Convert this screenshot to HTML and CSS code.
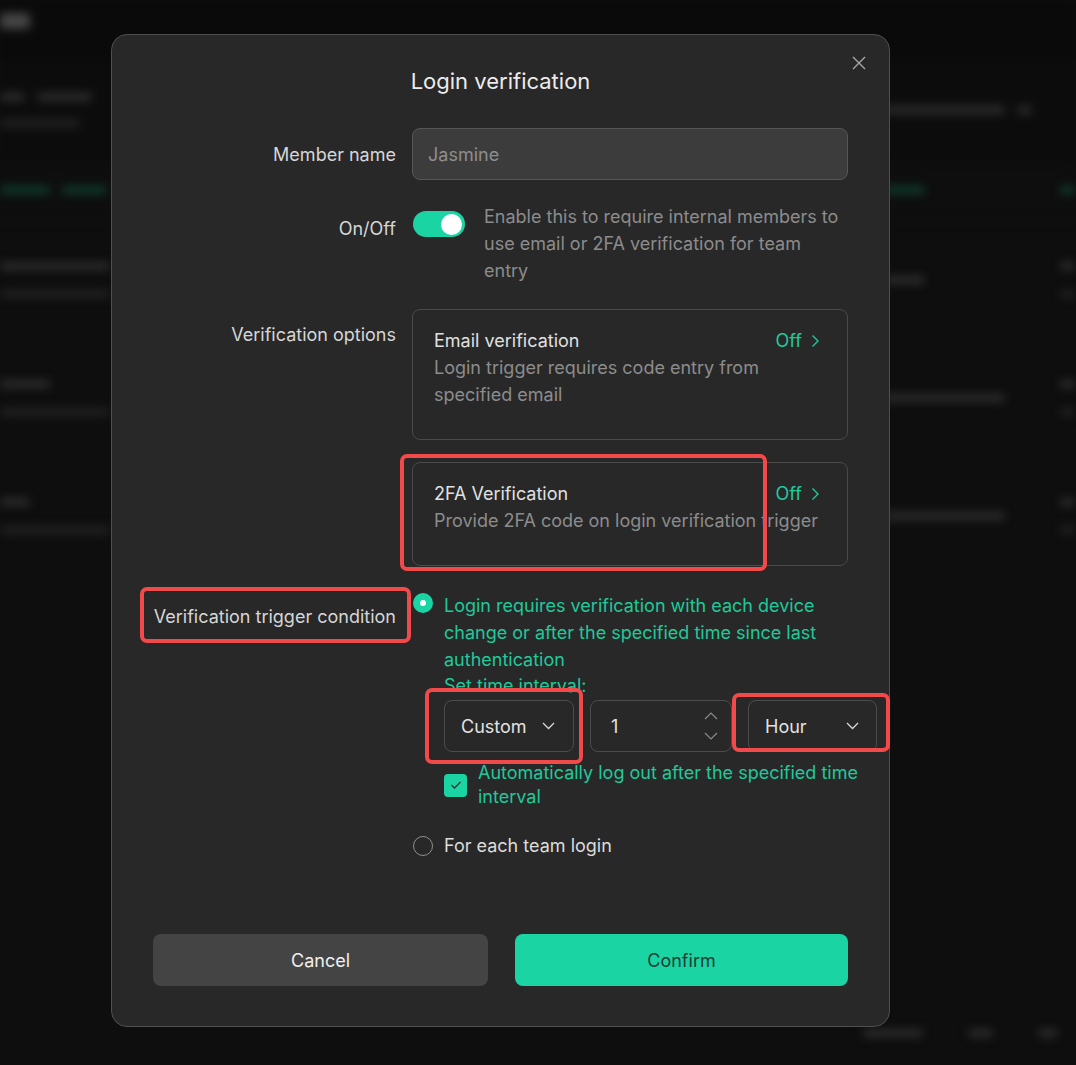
FILE: index.html
```html
<!DOCTYPE html>
<html lang="en">
<head>
    <meta charset="UTF-8">
    <meta name="viewport" content="width=device-width, initial-scale=1.0">
    <title>Login verification</title>
    <link rel="stylesheet" href="styles.css">
</head>
<body>
    <!-- blurred page behind the dialog -->
    <div class="backdrop">
        <div class="bd-top"><span class="bar bar-brand"></span></div>
        <div class="bd-row bd-header">
            <div class="bd-cell"><span class="bar-pair"><span class="bar w25"></span><span class="bar w55"></span></span><span class="bar w80 dim"></span></div>
            <div class="bd-cell"></div>
            <div class="bd-cell"><span class="bar-pair"><span class="bar w120"></span><span class="bar w15"></span></span></div>
            <div class="bd-cell"></div>
        </div>
        <div class="bd-row bd-tabs">
            <div class="bd-cell"><span class="bar-pair"><span class="bar green w50"></span><span class="bar green w45"></span></span></div>
            <div class="bd-cell"></div>
            <div class="bd-cell"><span class="bar green w40"></span></div>
            <div class="bd-cell"><span class="bar green w15"></span></div>
        </div>
        <div class="bd-row bd-item">
            <div class="bd-cell"><span class="bar w110"></span><span class="bar w110 dim"></span></div>
            <div class="bd-cell"></div>
            <div class="bd-cell"><span class="bar w40"></span></div>
            <div class="bd-cell"><span class="bar w15"></span><span class="bar w15 dim"></span></div>
        </div>
        <div class="bd-row bd-item">
            <div class="bd-cell"><span class="bar w50"></span><span class="bar w110 dim"></span></div>
            <div class="bd-cell"></div>
            <div class="bd-cell"><span class="bar w120"></span></div>
            <div class="bd-cell"><span class="bar w15"></span><span class="bar w15 dim"></span></div>
        </div>
        <div class="bd-row bd-item">
            <div class="bd-cell"><span class="bar w30"></span><span class="bar w110 dim"></span></div>
            <div class="bd-cell"></div>
            <div class="bd-cell"><span class="bar w120"></span></div>
            <div class="bd-cell"><span class="bar w15"></span><span class="bar w15 dim"></span></div>
        </div>
        <div class="bd-pager">
            <span class="bar w60"></span>
            <span class="bar w25"></span>
            <span class="bar w20"></span>
        </div>
    </div>

    <div class="dialog">
        <button class="close" aria-label="Close">
            <svg width="16" height="16" viewBox="0 0 16 16"><path d="M2 2L14 14M14 2L2 14" stroke="#a8a8a8" stroke-width="1.4" fill="none"/></svg>
        </button>
        <h2 class="dialog-title">Login verification</h2>

        <div class="form">
            <div class="form-row row-name">
                <label class="form-label">Member name</label>
                <div class="text-input">Jasmine</div>
            </div>

            <div class="form-row row-switch">
                <label class="form-label">On/Off</label>
                <div class="switch-line">
                    <span class="switch"><span class="knob"></span></span>
                    <p class="hint">Enable this to require internal members to use email or 2FA verification for team entry</p>
                </div>
            </div>

            <div class="form-row row-options">
                <label class="form-label">Verification options</label>
                <div class="option-list">
                    <div class="option-card">
                        <div class="option-head">
                            <span class="option-name">Email verification</span>
                            <span class="option-state">Off
                                <svg width="9" height="14" viewBox="0 0 9 14"><path d="M1.5 1.5L7 7L1.5 12.5" stroke="#1fcb9c" stroke-width="1.4" fill="none"/></svg>
                            </span>
                        </div>
                        <p class="option-desc">Login trigger requires code entry from specified email</p>
                    </div>
                    <div class="option-card">
                        <div class="option-head">
                            <span class="option-name">2FA Verification</span>
                            <span class="option-state">Off
                                <svg width="9" height="14" viewBox="0 0 9 14"><path d="M1.5 1.5L7 7L1.5 12.5" stroke="#1fcb9c" stroke-width="1.4" fill="none"/></svg>
                            </span>
                        </div>
                        <p class="option-desc nowrap">Provide 2FA code on login verification trigger</p>
                    </div>
                </div>
            </div>

            <div class="form-row row-trigger">
                <label class="form-label">Verification trigger condition</label>
                <div class="radio-group">
                    <div class="radio-item checked">
                        <span class="radio"><span class="dot"></span></span>
                        <div class="radio-body">
                            <p class="radio-text">Login requires verification with each device change or after the specified time since last authentication</p>
                            <p class="radio-text">Set time interval:</p>
                            <div class="interval">
                                <div class="select sel-custom">
                                    <span>Custom</span>
                                    <svg width="13" height="8" viewBox="0 0 13 8"><path d="M1 1L6.5 6.5L12 1" stroke="#d8d8d8" stroke-width="1.3" fill="none"/></svg>
                                </div>
                                <div class="select num-input">
                                    <span>1</span>
                                    <span class="spinner">
                                        <svg width="14" height="8" viewBox="0 0 14 8"><path d="M1 7L7 1L13 7" stroke="#8a8a8a" stroke-width="1.2" fill="none"/></svg>
                                        <svg width="14" height="8" viewBox="0 0 14 8"><path d="M1 1L7 7L13 1" stroke="#8a8a8a" stroke-width="1.2" fill="none"/></svg>
                                    </span>
                                </div>
                                <div class="select sel-hour">
                                    <span>Hour</span>
                                    <svg width="13" height="8" viewBox="0 0 13 8"><path d="M1 1L6.5 6.5L12 1" stroke="#d8d8d8" stroke-width="1.3" fill="none"/></svg>
                                </div>
                            </div>
                            <div class="check-line">
                                <span class="checkbox">
                                    <svg width="12" height="10" viewBox="0 0 12 10"><path d="M1.5 5L4.5 8L10.5 2" stroke="#1b3c33" stroke-width="1.4" fill="none"/></svg>
                                </span>
                                <span class="check-text">Automatically log out after the specified time interval</span>
                            </div>
                        </div>
                    </div>
                    <div class="radio-item">
                        <span class="radio"></span>
                        <span class="radio-label">For each team login</span>
                    </div>
                </div>
            </div>
        </div>

        <div class="dialog-footer">
            <button class="btn btn-cancel">Cancel</button>
            <button class="btn btn-confirm">Confirm</button>
        </div>
    </div>

    <!-- red annotation frames drawn over the screenshot -->
    <div class="mark mark-2fa"></div>
    <div class="mark mark-label"></div>
    <div class="mark mark-custom"></div>
    <div class="mark mark-hour"></div>
</body>
</html>
```

FILE: styles.css
```css
body {
    margin: 0;
    width: 1076px;
    height: 1065px;
    overflow: hidden;
    position: relative;
    background-color: #0e0e0e;
    font-family: Inter, "Noto Sans", Arial, sans-serif;
    color: #d6d6d6;
}
p {
    margin: 0;
}

/* blurred page */
.backdrop {
    position: absolute;
    inset: 0;
    filter: blur(5px);
    display: flex;
    flex-direction: column;
}
.bd-top {
    height: 60px;
    padding-top: 13px;
    box-sizing: border-box;
    background-color: #0a0a0a;
}
.bar {
    display: block;
    height: 8px;
    border-radius: 4px;
    background-color: #2d2d2d;
}
.bar.dim {
    background-color: #222;
}
.bar.green {
    background-color: #0f3b2d;
}
.bar-brand {
    width: 30px;
    height: 16px;
    background-color: #454545;
}
.bar-pair {
    display: flex;
    gap: 12px;
}
.w15 { width: 15px; }
.w20 { width: 20px; }
.w25 { width: 25px; }
.w30 { width: 30px; }
.w40 { width: 40px; }
.w45 { width: 45px; }
.w50 { width: 50px; }
.w55 { width: 55px; }
.w60 { width: 60px; }
.w80 { width: 80px; }
.w110 { width: 110px; }
.w120 { width: 120px; }
.bd-row {
    display: grid;
    grid-template-columns: 120px 765px 175px 1fr;
}
.bd-cell {
    display: flex;
    flex-direction: column;
    justify-content: center;
    gap: 20px;
}
.bd-header {
    height: 100px;
    background-color: #0c0c0c;
}
.bd-header .bd-cell {
    gap: 18px;
}
.bd-tabs {
    height: 60px;
    border-bottom: 1px solid #151515;
}
.bd-item {
    height: 118px;
}
.bd-pager {
    margin-top: auto;
    margin-bottom: 28px;
    display: flex;
    justify-content: flex-end;
    align-items: center;
    gap: 45px;
    padding-right: 18px;
}

/* dialog */
.dialog {
    position: absolute;
    left: 111px;
    top: 34px;
    width: 779px;
    box-sizing: border-box;
    padding: 32px 41px 40px;
    background-color: #282828;
    border: 1px solid #4f4f4f;
    border-radius: 16px;
}
.close {
    position: absolute;
    top: 20px;
    right: 22px;
    padding: 0;
    border: none;
    background: none;
    width: 16px;
    height: 16px;
    cursor: pointer;
}
.close svg {
    display: block;
}
.dialog-title {
    margin: 0;
    text-align: center;
    font-size: 22px;
    line-height: 28px;
    font-weight: 400;
    color: #ececec;
}
.form {
    margin-top: 33px;
}
.form-row {
    display: grid;
    grid-template-columns: 243px 436px;
    column-gap: 16px;
}
.form-label {
    text-align: right;
    font-size: 18px;
    line-height: 27px;
    color: #d6d6d6;
    white-space: nowrap;
}
.row-name .form-label {
    align-self: center;
}
.text-input {
    height: 52px;
    box-sizing: border-box;
    padding: 0 15px;
    display: flex;
    align-items: center;
    font-size: 18px;
    color: #8e8e8e;
    background-color: #3c3c3c;
    border: 1px solid #565656;
    border-radius: 8px;
}

.row-switch {
    margin-top: 23px;
}
.row-switch .form-label {
    padding-top: 12px;
}
.switch-line {
    display: flex;
    gap: 19px;
    padding-left: 1px;
}
.switch {
    flex: none;
    margin-top: 8px;
    width: 52px;
    height: 26px;
    border-radius: 13px;
    background-color: #1bd4a4;
    display: flex;
    justify-content: flex-end;
    align-items: center;
    padding: 0 3px;
    box-sizing: border-box;
}
.knob {
    width: 21px;
    height: 21px;
    border-radius: 50%;
    background-color: #fff;
}
.hint {
    font-size: 18px;
    line-height: 27px;
    color: #8c8c8c;
}

.row-options {
    margin-top: 25px;
}
.row-options .form-label {
    padding-top: 12px;
}
.option-list {
    display: flex;
    flex-direction: column;
    gap: 22px;
}
.option-card {
    border: 1px solid #4a4a4a;
    border-radius: 8px;
    padding: 17px 27px 31px 21px;
}
.option-head {
    display: flex;
    justify-content: space-between;
    align-items: center;
    line-height: 27px;
    font-size: 18px;
}
.option-name {
    color: #e0e0e0;
}
.option-state {
    display: flex;
    align-items: center;
    gap: 9px;
    color: #1fcb9c;
}
.option-desc {
    font-size: 18px;
    line-height: 27px;
    color: #8c8c8c;
}
.option-desc.nowrap {
    white-space: nowrap;
}

.row-trigger {
    margin-top: 27px;
}
.row-trigger .form-label {
    padding-top: 10px;
}
.radio-group {
    display: flex;
    flex-direction: column;
    gap: 27px;
    padding-left: 1px;
}
.radio-item {
    display: flex;
    gap: 11px;
    align-items: flex-start;
}
.radio {
    flex: none;
    width: 20px;
    height: 20px;
    box-sizing: border-box;
    border-radius: 50%;
    border: 1.5px solid #8f8f8f;
    display: flex;
    justify-content: center;
    align-items: center;
}
.radio-item.checked .radio {
    border: none;
    background-color: #1bd4a4;
}
.dot {
    width: 6px;
    height: 6px;
    border-radius: 50%;
    background-color: #fff;
}
.radio-text {
    font-size: 18px;
    line-height: 27px;
    color: #20c99a;
    margin-top: -1px;
}
.radio-label {
    font-size: 18px;
    line-height: 20px;
    color: #dcdcdc;
}
.interval {
    display: flex;
    gap: 16px;
    margin-top: 1px;
}
.select {
    height: 52px;
    box-sizing: border-box;
    border: 1px solid #4c4c4c;
    border-radius: 8px;
    display: flex;
    align-items: center;
    justify-content: space-between;
    font-size: 18px;
    color: #e2e2e2;
}
.sel-custom {
    width: 130px;
    padding: 0 18px 0 16px;
}
.num-input {
    width: 142px;
    padding: 0 13px 0 20px;
}
.sel-hour {
    width: 129px;
    padding: 0 17px 0 16px;
}
.spinner {
    display: flex;
    flex-direction: column;
    gap: 12px;
}
.spinner svg {
    display: block;
}
.check-line {
    margin-top: 9px;
    margin-right: -30px;
    display: flex;
    align-items: center;
    gap: 11px;
}
.checkbox {
    flex: none;
    width: 23px;
    height: 23px;
    border-radius: 4px;
    background-color: #1bd4a4;
    display: flex;
    justify-content: center;
    align-items: center;
}
.check-text {
    font-size: 18px;
    line-height: 24px;
    color: #20c99a;
}

.dialog-footer {
    margin-top: 78px;
    display: grid;
    grid-template-columns: 335px 333px;
    column-gap: 27px;
}
.btn {
    height: 52px;
    border: none;
    border-radius: 8px;
    font-family: inherit;
    font-size: 18px;
    cursor: pointer;
}
.btn-cancel {
    background-color: #444444;
    color: #f0f0f0;
}
.btn-confirm {
    background-color: #1bd4a4;
    color: #1b3c33;
}

/* annotation frames */
.mark {
    position: absolute;
    box-sizing: border-box;
    border: 4.5px solid #f24a4a;
    border-radius: 7px;
}
.mark-2fa {
    left: 400px;
    top: 454px;
    width: 367px;
    height: 117px;
}
.mark-label {
    left: 140px;
    top: 587px;
    width: 271px;
    height: 56px;
}
.mark-custom {
    left: 425px;
    top: 688px;
    width: 158px;
    height: 76px;
}
.mark-hour {
    left: 732px;
    top: 693px;
    width: 158px;
    height: 59px;
}
```
